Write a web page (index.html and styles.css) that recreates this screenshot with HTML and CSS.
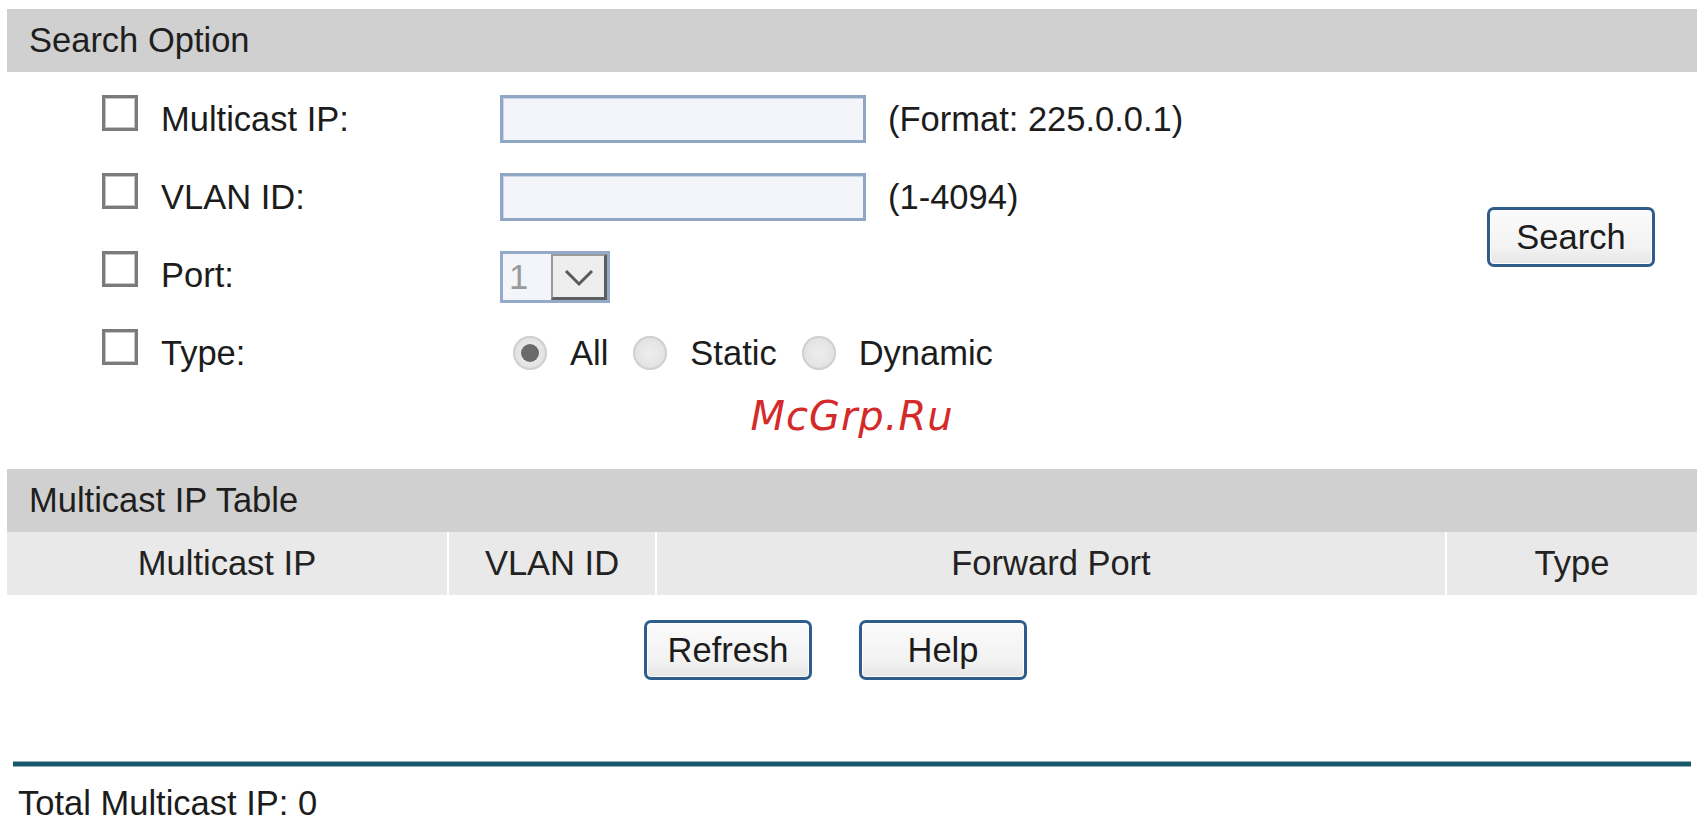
FILE: index.html
```html
<!DOCTYPE html>
<html>
<head>
<meta charset="utf-8">
<link rel="stylesheet" href="styles.css">
</head>
<body>
<div class="page">
  <div class="bar">Search Option</div>
  <div class="search">
    <div class="rows">
      <div class="row">
        <span class="cb"></span><span class="label">Multicast IP:</span>
        <div class="ctrl"><span class="text"></span><span class="hint">(Format: 225.0.0.1)</span></div>
      </div>
      <div class="row">
        <span class="cb"></span><span class="label">VLAN ID:</span>
        <div class="ctrl"><span class="text"></span><span class="hint">(1-4094)</span></div>
      </div>
      <div class="row">
        <span class="cb"></span><span class="label">Port:</span>
        <div class="ctrl">
          <div class="select"><span class="sel-val">1</span><span class="sel-btn"><svg width="34" height="22" viewBox="0 0 34 22"><path d="M4 5 L17 18 L30 5" fill="none" stroke="#5a5a5a" stroke-width="3"/></svg></span></div>
        </div>
      </div>
      <div class="row">
        <span class="cb"></span><span class="label">Type:</span>
        <div class="ctrl radios">
          <span class="radio checked"></span><span class="rlabel">All</span>
          <span class="radio"></span><span class="rlabel">Static</span>
          <span class="radio"></span><span class="rlabel">Dynamic</span>
        </div>
      </div>
    </div>
    <div class="actions"><button class="btn btn-search">Search</button></div>
  </div>
  <div class="watermark">McGrp.Ru</div>
  <div class="bar">Multicast IP Table</div>
  <div class="thead">
    <div class="th">Multicast IP</div>
    <div class="th">VLAN ID</div>
    <div class="th">Forward Port</div>
    <div class="th">Type</div>
  </div>
  <div class="buttons">
    <button class="btn">Refresh</button>
    <button class="btn">Help</button>
  </div>
  <div class="rule"></div>
  <div class="total">Total Multicast IP: 0</div>
</div>
</body>
</html>
```
FILE: styles.css
```css
html, body {
  margin: 0;
  padding: 0;
  background: #ffffff;
}
body {
  font-family: "Liberation Sans", Arial, sans-serif;
  font-size: 34.5px;
  color: #1c1c1c;
}
.page {
  padding: 9px 5px 0 7px;
}
.bar {
  height: 63px;
  line-height: 63px;
  background: #d0d0d0;
  padding-left: 22px;
  color: #1e1e1e;
}
.search {
  display: flex;
  padding-top: 8px;
}
.rows {
  flex: 1;
}
.row {
  height: 78px;
  display: flex;
  align-items: center;
  padding-left: 95px;
}
.cb {
  width: 30px;
  height: 30px;
  border: 3px solid #7b7b7b;
  box-shadow: inset 0 0 0 1px #c4c4c4;
  background: #fff;
  flex: none;
  margin-bottom: 12px;
}
.label {
  width: 339px;
  margin-left: 23px;
  flex: none;
}
.ctrl {
  display: flex;
  align-items: center;
}
.text {
  display: block;
  width: 360px;
  height: 42px;
  border: 3px solid #8fa6c4;
  background: #f3f5fa;
  box-shadow: inset 1px 1px 0 #c9d4e4;
}
.hint {
  margin-left: 22px;
}
.select {
  display: flex;
  width: 104px;
  height: 46px;
  border: 3px solid #93aacb;
  background: #f3f5fa;
  margin-top: 4px;
}
.sel-val {
  width: 48px;
  line-height: 46px;
  padding-left: 6px;
  color: #9a9a9a;
  box-sizing: border-box;
}
.sel-btn {
  flex: 1;
  display: flex;
  align-items: center;
  justify-content: center;
  background: #eeeeee;
  border-top: 2px solid #9a9a9a;
  border-left: 2px solid #9a9a9a;
  border-right: 3px solid #5e5e5e;
  border-bottom: 3px solid #5e5e5e;
}
.radios {
  padding-left: 13px;
}
.radio {
  width: 34px;
  height: 34px;
  border-radius: 50%;
  background: radial-gradient(circle, #eeeeee 0, #e4e4e4 55%, #d2d2d2 100%);
  box-shadow: inset 0 0 0 2px #d0d0d0;
  position: relative;
  flex: none;
}
.radio.checked::after {
  content: "";
  position: absolute;
  left: 8px;
  top: 8px;
  width: 18px;
  height: 18px;
  border-radius: 50%;
  background: #6a6a6a;
}
.rlabel {
  margin-left: 23px;
  margin-right: 25px;
}
.actions {
  align-self: flex-start;
  margin-top: 127px;
  padding-right: 42px;
}
.btn {
  font-family: "Liberation Sans", Arial, sans-serif;
  font-size: 34.5px;
  color: #1c1c1c;
  width: 168px;
  height: 60px;
  padding: 0;
  border: 3px solid #2e5d8b;
  border-radius: 7px;
  background: linear-gradient(#fbfbfb, #f2f2f2 70%, #e6e6e6);
  box-shadow: inset 0 0 0 1px #ffffff;
}
.watermark {
  height: 48px;
  line-height: 48px;
  text-align: center;
  font-family: "DejaVu Sans", sans-serif;
  font-style: oblique;
  font-size: 40px;
  letter-spacing: 1px;
  color: #d42a2a;
  margin-bottom: 29px;
}
.thead {
  display: grid;
  grid-template-columns: 440px 206px 788px 1fr;
  column-gap: 2px;
  background: #ffffff;
}
.th {
  height: 63px;
  line-height: 63px;
  background: #e9e9e9;
  text-align: center;
  color: #222;
}
.buttons {
  display: flex;
  justify-content: center;
  gap: 47px;
  margin-top: 25px;
  padding-right: 33px;
}
.rule {
  margin: 81px 6px 0 6px;
  height: 4px;
  background: #15596a;
  border-top: 1px solid #8fb0b8;
  border-bottom: 1px solid #8fb0b8;
}
.total {
  margin-top: 16px;
  padding-left: 11px;
  line-height: 40px;
}
```
